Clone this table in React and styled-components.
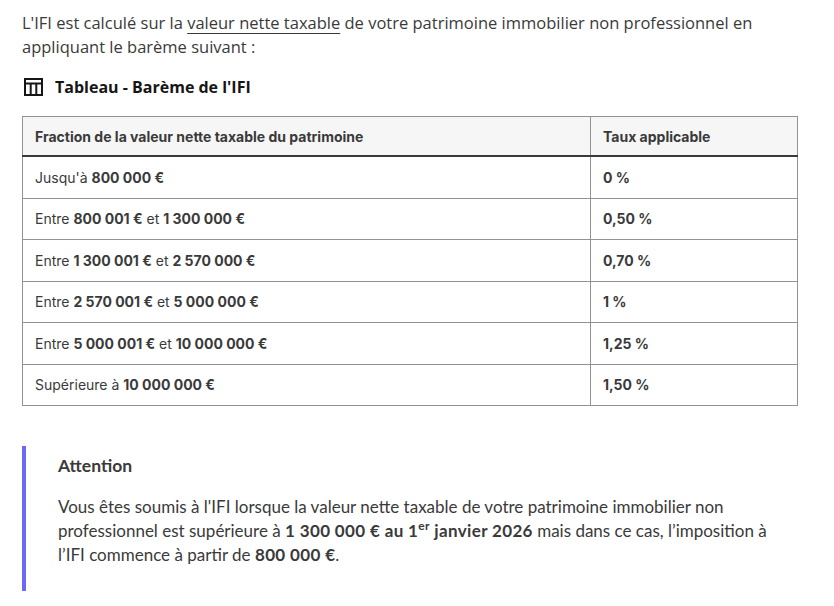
import styled, { createGlobalStyle } from "styled-components";

const GlobalStyle = createGlobalStyle`
  html, body {
    margin: 0;
    padding: 0;
    background: #fff;
  }
`;

const Page = styled.div`
  padding: 11px 36px 16px 22px;
  color: #3a3a3a;
`;

const Intro = styled.p`
  margin: 0;
  font-family: "Open Sans", "Noto Sans", sans-serif;
  font-size: 16.5px;
  line-height: 24px;
  color: #3a3a3a;

  & a {
    color: inherit;
    text-decoration: underline;
    text-underline-offset: 4px;
    text-decoration-thickness: 1px;
  }
`;

const Caption = styled.div`
  display: flex;
  align-items: center;
  gap: 12px;
  margin-top: 17px;
  padding-left: 2px;
  font-family: "Open Sans", "Noto Sans", sans-serif;
  font-weight: 700;
  font-size: 16px;
  color: #161616;
`;

const Table = styled.table`
  margin-top: 18px;
  width: 100%;
  border-collapse: collapse;
  font-family: "Inter", "Open Sans", sans-serif;
  font-size: 14px;
  color: #3a3a3a;
`;

const Th = styled.th`
  text-align: left;
  font-weight: 700;
  height: 38px;
  padding: 0 12px;
  background: #f6f6f6;
  border: 1px solid #929292;
  border-bottom: 2px solid #3a3a3a;
  width: ${(p) => p.$w || "auto"};
`;

const Td = styled.td`
  height: 40.5px;
  padding: 0 12px;
  border: 1px solid #929292;
  font-weight: ${(p) => (p.$bold ? 700 : 400)};

  & b {
    font-weight: 700;
  }
`;

const Callout = styled.div`
  margin-top: 40px;
  border-left: 4px solid #6a6af4;
  padding: 8px 20px 24px 32px;
  font-family: "Lato", "Open Sans", sans-serif;
  color: #3a3a3a;
`;

const CalloutTitle = styled.div`
  font-weight: 700;
  font-size: 17.5px;
  line-height: 24px;
`;

const CalloutText = styled.p`
  margin: 17px 0 0;
  font-size: 17px;
  line-height: 24px;

  & b {
    letter-spacing: 0.35px;
  }

  & sup {
    font-size: 12px;
    line-height: 0;
  }
`;

const TableIcon = () => (
  <svg width="19" height="18" viewBox="0 0 19 18" fill="none" stroke="#161616" strokeWidth="2">
    <rect x="1" y="1" width="17" height="16" />
    <line x1="1" y1="5.5" x2="18" y2="5.5" />
    <line x1="6.7" y1="5.5" x2="6.7" y2="17" />
    <line x1="12.3" y1="5.5" x2="12.3" y2="17" />
  </svg>
);

const rows = [
  [<>Jusqu'à <b>800 000 €</b></>, "0 %"],
  [<>Entre <b>800 001 €</b> et <b>1 300 000 €</b></>, "0,50 %"],
  [<>Entre <b>1 300 001 €</b> et <b>2 570 000 €</b></>, "0,70 %"],
  [<>Entre <b>2 570 001 €</b> et <b>5 000 000 €</b></>, "1 %"],
  [<>Entre <b>5 000 001 €</b> et <b>10 000 000 €</b></>, "1,25 %"],
  [<>Supérieure à <b>10 000 000 €</b></>, "1,50 %"],
];

export default function App() {
  return (
    <>
      <GlobalStyle />
      <Page>
        <Intro>
          L'IFI est calculé sur la <a href="#">valeur nette taxable</a> de votre patrimoine immobilier non professionnel en
          appliquant le barème suivant :
        </Intro>

        <Caption>
          <TableIcon />
          Tableau - Barème de l'IFI
        </Caption>

        <Table>
          <thead>
            <tr>
              <Th $w="543px">Fraction de la valeur nette taxable du patrimoine</Th>
              <Th>Taux applicable</Th>
            </tr>
          </thead>
          <tbody>
            {rows.map(([label, rate], i) => (
              <tr key={i}>
                <Td>{label}</Td>
                <Td $bold>{rate}</Td>
              </tr>
            ))}
          </tbody>
        </Table>

        <Callout>
          <CalloutTitle>Attention</CalloutTitle>
          <CalloutText>
            Vous êtes soumis à l'IFI lorsque la valeur nette taxable de votre patrimoine immobilier non
            professionnel est supérieure à <b>1 300 000 € au 1<sup>er</sup> janvier 2026</b> mais dans ce cas, l’imposition à
            l’IFI commence à partir de <b>800 000 €</b>.
          </CalloutText>
        </Callout>
      </Page>
    </>
  );
}
